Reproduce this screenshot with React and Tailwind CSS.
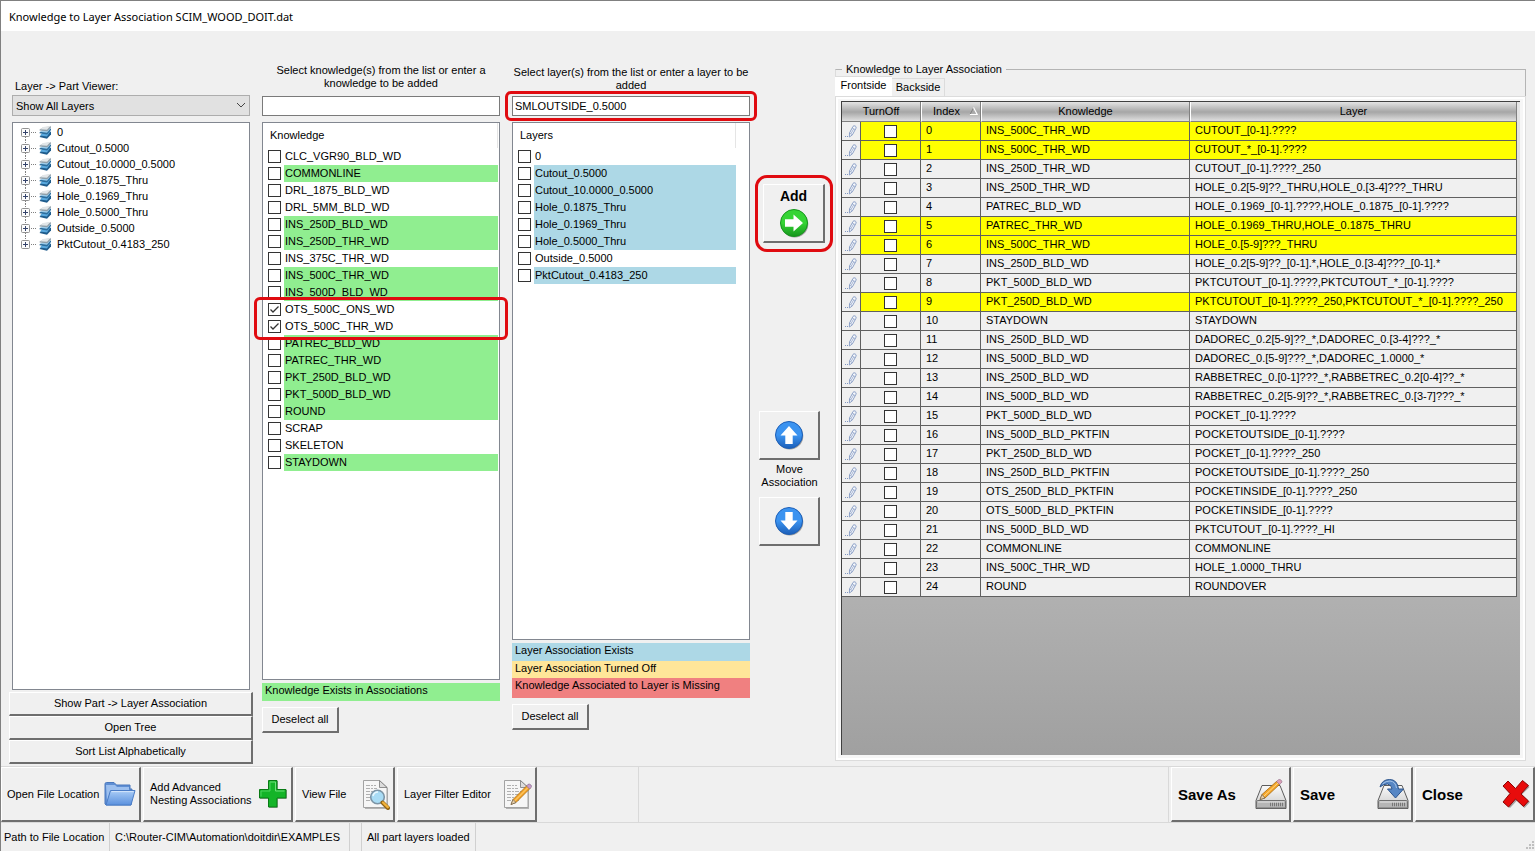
import React, { useState } from "react";

const treeLayers = [
  "0",
  "Cutout_0.5000",
  "Cutout_10.0000_0.5000",
  "Hole_0.1875_Thru",
  "Hole_0.1969_Thru",
  "Hole_0.5000_Thru",
  "Outside_0.5000",
  "PktCutout_0.4183_250",
];

const knowledgeItems = [
  { name: "CLC_VGR90_BLD_WD" },
  { name: "COMMONLINE", exists: true },
  { name: "DRL_1875_BLD_WD" },
  { name: "DRL_5MM_BLD_WD" },
  { name: "INS_250D_BLD_WD", exists: true },
  { name: "INS_250D_THR_WD", exists: true },
  { name: "INS_375C_THR_WD" },
  { name: "INS_500C_THR_WD", exists: true },
  { name: "INS_500D_BLD_WD", exists: true },
  { name: "OTS_500C_ONS_WD", checked: true, marked: true },
  { name: "OTS_500C_THR_WD", checked: true },
  { name: "PATREC_BLD_WD", exists: true },
  { name: "PATREC_THR_WD", exists: true },
  { name: "PKT_250D_BLD_WD", exists: true },
  { name: "PKT_500D_BLD_WD", exists: true },
  { name: "ROUND", exists: true },
  { name: "SCRAP" },
  { name: "SKELETON" },
  { name: "STAYDOWN", exists: true },
];

const layerItems = [
  { name: "0" },
  { name: "Cutout_0.5000", exists: true },
  { name: "Cutout_10.0000_0.5000", exists: true },
  { name: "Hole_0.1875_Thru", exists: true },
  { name: "Hole_0.1969_Thru", exists: true },
  { name: "Hole_0.5000_Thru", exists: true },
  { name: "Outside_0.5000" },
  { name: "PktCutout_0.4183_250", exists: true },
];

const associations = [
  ["INS_500C_THR_WD", "CUTOUT_[0-1].????", true],
  ["INS_500C_THR_WD", "CUTOUT_*_[0-1].????", true],
  ["INS_250D_THR_WD", "CUTOUT_[0-1].????_250"],
  ["INS_250D_THR_WD", "HOLE_0.2[5-9]??_THRU,HOLE_0.[3-4]???_THRU"],
  ["PATREC_BLD_WD", "HOLE_0.1969_[0-1].????,HOLE_0.1875_[0-1].????"],
  ["PATREC_THR_WD", "HOLE_0.1969_THRU,HOLE_0.1875_THRU", true],
  ["INS_500C_THR_WD", "HOLE_0.[5-9]???_THRU", true],
  ["INS_250D_BLD_WD", "HOLE_0.2[5-9]??_[0-1].*,HOLE_0.[3-4]???_[0-1].*"],
  ["PKT_500D_BLD_WD", "PKTCUTOUT_[0-1].????,PKTCUTOUT_*_[0-1].????"],
  ["PKT_250D_BLD_WD", "PKTCUTOUT_[0-1].????_250,PKTCUTOUT_*_[0-1].????_250", true],
  ["STAYDOWN", "STAYDOWN"],
  ["INS_250D_BLD_WD", "DADOREC_0.2[5-9]??_*,DADOREC_0.[3-4]???_*"],
  ["INS_500D_BLD_WD", "DADOREC_0.[5-9]???_*,DADOREC_1.0000_*"],
  ["INS_250D_BLD_WD", "RABBETREC_0.[0-1]???_*,RABBETREC_0.2[0-4]??_*"],
  ["INS_500D_BLD_WD", "RABBETREC_0.2[5-9]??_*,RABBETREC_0.[3-7]???_*"],
  ["PKT_500D_BLD_WD", "POCKET_[0-1].????"],
  ["INS_500D_BLD_PKTFIN", "POCKETOUTSIDE_[0-1].????"],
  ["PKT_250D_BLD_WD", "POCKET_[0-1].????_250"],
  ["INS_250D_BLD_PKTFIN", "POCKETOUTSIDE_[0-1].????_250"],
  ["OTS_250D_BLD_PKTFIN", "POCKETINSIDE_[0-1].????_250"],
  ["OTS_500D_BLD_PKTFIN", "POCKETINSIDE_[0-1].????"],
  ["INS_500D_BLD_WD", "PKTCUTOUT_[0-1].????_HI"],
  ["COMMONLINE", "COMMONLINE"],
  ["INS_500C_THR_WD", "HOLE_1.0000_THRU"],
  ["ROUND", "ROUNDOVER"],
];

const Button = ({ className = "", children, ...props }) => (
  <button
    type="button"
    className={`border-t border-l border-r-2 border-b-2 border-t-white border-l-white border-r-[#6e6e6e] border-b-[#6e6e6e] bg-[#f0f0f0] ${className}`}
    {...props}
  >
    {children}
  </button>
);

const Checkbox = (props) => (
  <span className="relative block h-[13px] w-[13px] shrink-0">
    <input
      type="checkbox"
      className="peer block h-[13px] w-[13px] appearance-none border border-[#333] bg-white"
      {...props}
    />
    <svg
      className="pointer-events-none absolute inset-0 hidden peer-checked:block"
      width="13"
      height="13"
      viewBox="0 0 13 13"
      fill="none"
      stroke="#333"
      strokeWidth="1.3"
    >
      <path d="M2.5 6.5 L5 9 L10.5 3.5" />
    </svg>
  </span>
);

const ExpanderIcon = ({ first, last }) => (
  <svg width="24" height="16" viewBox="0 0 24 16" className="shrink-0">
    {!first && <path d="M4.5 0V4" stroke="#808080" strokeDasharray="1 1" />}
    {!last && <path d="M4.5 13V16" stroke="#808080" strokeDasharray="1 1" />}
    <path d="M10 8.5H16" stroke="#808080" strokeDasharray="1 1" />
    <rect x="0.5" y="4.5" width="8" height="8" rx="1" fill="#fcfcfc" stroke="#919191" />
    <path d="M2 8.5H7M4.5 6V11" stroke="#34436b" />
  </svg>
);

const LayersIcon = () => (
  <svg width="13" height="14" viewBox="0 0 13 14" className="-ml-[6px] shrink-0">
    <path d="M3.5 8.5L12 6.8V9.6L8 13.8L0.5 12Z" fill="#1f5c8c" />
    <path d="M4 7.2L11.8 5.8L8 11.6L0.8 10.4Z" fill="#5aa9de" />
    <path d="M3.8 5.2L12 3.6V5L8.2 9.4L0.5 8.2V7.4Z" fill="#2c6e9e" />
    <path d="M4 4.8L11.6 3.4L8 7.8L1 6.8Z" fill="#9fcdea" />
    <path d="M4 2.6L12 1.2V2.4L8.2 6.2L0.6 5.4V4.6Z" fill="#8f9ea8" />
    <path d="M4.2 2L11.6 0.8L8 4.8L1 4.2Z" fill="#e2e6e8" />
  </svg>
);

const ArrowIcon = ({ color, dark, rotate, id }) => (
  <svg width="30" height="30" viewBox="0 0 30 30">
    <defs>
      <linearGradient id={id} x1="0" y1="0" x2="0" y2="1">
        <stop offset="0" stopColor={color} />
        <stop offset="0.5" stopColor={color} />
        <stop offset="1" stopColor={dark} />
      </linearGradient>
    </defs>
    <circle cx="15.7" cy="16" r="13.6" fill="#000" opacity="0.35" />
    <circle cx="15" cy="15" r="13.5" fill={`url(#${id})`} stroke={dark} />
    <path
      d="M6 11.3H14.5V6.5L24 15L14.5 23.5V18.7H6Z"
      fill="#fff"
      transform={`rotate(${rotate} 15 15)`}
    />
  </svg>
);

const PencilIcon = () => (
  <svg width="14" height="14" viewBox="0 0 14 14" className="mx-auto mt-[2px]">
    <path
      d="M5.5 9L9 2.4Q9.8 1.4 11.2 2T12 4.2L8.4 10.8L5.4 13Z"
      fill="#f6f8fb"
      stroke="#8197c2"
      strokeWidth="0.9"
    />
    <path d="M8.2 4L11.2 5.6M5.6 9.2L8.2 10.6M7 9.6L9.6 5" stroke="#8197c2" strokeWidth="0.7" />
    <path d="M1 12.5H2M3 12.5H4" stroke="#8197c2" />
  </svg>
);

const FolderIcon = () => (
  <svg width="32" height="26" viewBox="0 0 32 26">
    <defs>
      <linearGradient id="folder" x1="0" y1="0" x2="0" y2="1">
        <stop offset="0" stopColor="#a9ccf6" />
        <stop offset="1" stopColor="#5b91de" />
      </linearGradient>
    </defs>
    <path d="M1 23V3Q1 1.5 2.5 1.5H10L12.5 4H26V8H28L27 24H2Z" fill="#5f8fd4" stroke="#4a78bd" />
    <path d="M2 4H11L13 6H25V10H7L3 20Z" fill="#9dc0ef" />
    <path d="M6.5 9.5H31L27 24H2Z" fill="url(#folder)" stroke="#4a7cc6" />
    <path d="M7.5 10.6H29.6" stroke="#d3e5fb" />
  </svg>
);

const PlusIcon = () => (
  <svg width="30" height="30" viewBox="0 0 30 30">
    <path d="M11 2H20V11H29V20H20V29H11V20H2V11H11Z" fill="#555" opacity="0.45" />
    <path
      d="M10.5 1.5H19V10.5H28V19H19V28H10.5V19H1.5V10.5H10.5Z"
      fill="#14b428"
      stroke="#087a14"
    />
    <path d="M12 3H17.5V12H26.5" fill="none" stroke="#6ee07a" />
    <path d="M12 3V12H3V17.5" fill="none" stroke="#4ed35e" />
  </svg>
);

const PagePaper = () => (
  <>
    <path d="M3 3H19L26 9V30H3Z" fill="#8a8a8a" opacity="0.6" />
    <path d="M1.5 1.5H17.5L25 8.5V28.5H1.5Z" fill="#f6f6f6" stroke="#a2a2a2" />
    <path d="M17.5 1.5L25 8.5H17.5Z" fill="#dcdcdc" stroke="#777" strokeWidth="0.8" />
    <path
      d="M4 6.5H14M4 9.5H15M4 12.5H20M4 15.5H20M4 18.5H18M4 21.5H17"
      stroke="#b0b0b0"
      strokeDasharray="4 1 2 1"
    />
  </>
);

const ViewFileIcon = () => (
  <svg width="28" height="31" viewBox="0 0 28 31">
    <PagePaper />
    <circle cx="15.5" cy="18" r="6.8" fill="#a9dcf5" stroke="#7d95a6" strokeWidth="1.6" />
    <path d="M11 17Q12 13 16 13" stroke="#e9f8ff" strokeWidth="1.6" fill="none" />
    <path d="M20.5 23.5L26 29" stroke="#8f6213" strokeWidth="4" strokeLinecap="round" />
    <path d="M21 23.5L25.8 28.2" stroke="#f1b13a" strokeWidth="2.4" strokeLinecap="round" />
  </svg>
);

const EditFileIcon = () => (
  <svg width="29" height="31" viewBox="0 0 29 31">
    <PagePaper />
    <path d="M8 25.5L10 20.5L24 6.5L27 9.5L13 23.5Z" fill="#f5a62a" stroke="#a76a10" strokeWidth="0.8" />
    <path d="M11.5 22L25 8.5" stroke="#ffd98a" />
    <path d="M8 25.5L10 20.5L13 23.5Z" fill="#e9cfa6" stroke="#555" strokeWidth="0.6" />
    <path d="M23.5 7L25 5.3Q26.5 4.5 28 6T27.8 8.7L26.5 10Z" fill="#c79ac9" stroke="#7c6a85" strokeWidth="0.6" />
  </svg>
);

const DiskBody = () => (
  <>
    <defs>
      <linearGradient id="disk" x1="0" y1="0" x2="0" y2="1">
        <stop offset="0" stopColor="#fafafa" />
        <stop offset="1" stopColor="#c9c9c9" />
      </linearGradient>
    </defs>
    <path d="M7 7.5H25L31 22.5V30.5H1V22.5Z" fill="url(#disk)" stroke="#5c5c5c" strokeLinejoin="round" />
    <rect x="1.5" y="22.5" width="29" height="7.5" rx="1" fill="#b5b5b5" stroke="#707070" />
    <path d="M15 26.2H28" stroke="#777" strokeWidth="4" strokeDasharray="1 1" />
    <path d="M3 24H29" stroke="#e6e6e6" />
  </>
);

const SaveAsIcon = () => (
  <svg width="32" height="32" viewBox="0 0 32 32">
    <DiskBody />
    <path d="M5 21.5L7 16.5L22 3L25 6L10 20Z" fill="#f5a62a" stroke="#a76a10" strokeWidth="0.8" />
    <path d="M8.5 18.5L23 5" stroke="#ffd98a" />
    <path d="M5 21.5L7 16.5L10 20Z" fill="#e9cfa6" stroke="#555" strokeWidth="0.6" />
    <path d="M21.5 3.5L23.3 1.8Q25 0.8 26.4 2.4T26.2 5L24.5 6.6Z" fill="#dba0b8" stroke="#8d6c86" strokeWidth="0.6" />
  </svg>
);

const SaveIcon = () => (
  <svg width="32" height="32" viewBox="0 0 32 32">
    <DiskBody />
    <path
      d="M3 9Q5 1.5 12.5 1.5Q20.5 1.5 21.5 11H26.5L18.5 20L10.5 11H15Q14.5 6.5 10.5 6Q6.5 5.8 3 9Z"
      fill="#5686c4"
      stroke="#2c548c"
      strokeLinejoin="round"
    />
    <path d="M5.5 6Q9 2.8 13 3Q18.5 3.5 19.5 10" stroke="#a5c4e8" fill="none" />
  </svg>
);

const CloseIcon = () => (
  <svg width="30" height="30" viewBox="0 0 30 30">
    <path d="M4 8L8 4L15.5 10.5L23 3L28.5 8L21 15.5L29 23L23.5 29L16 21.5L9 29L3 24L10 16Z" fill="#555" opacity="0.5" />
    <path
      d="M2 7L7 2L14.5 9.5L21.5 1.5L27.5 6.5L20 15L27.5 22L22.5 27.5L14.5 20L7.5 28L2 23L9 14.5Z"
      fill="#e80c0c"
      stroke="#8d0606"
    />
  </svg>
);

const CheckList = ({ title, items, color, className, headerClass }) => (
  <div className="mt-[6px] flex-1 border border-[#828790] bg-white">
    <div className={`h-[25px] border-r border-[#e5e5e5] pt-[6px] pl-[7px] ${headerClass}`}>
      {title}
    </div>
    <ul>
      {items.map((item) => (
        <li key={item.name} className={`relative pl-[5px] ${className}`}>
          <label className="flex h-[17px] items-center gap-[3px]">
            <Checkbox defaultChecked={item.checked} />
            <span className={`h-[17px] flex-1 pl-px leading-[17px] ${item.exists ? color : ""}`}>
              {item.name}
            </span>
          </label>
          {item.marked && (
            <span className="pointer-events-none absolute -top-1 -right-[9px] -left-[9px] z-10 h-[43px] rounded-md border-3 border-[#e00b10]" />
          )}
        </li>
      ))}
    </ul>
  </div>
);

const AssociationTable = () => (
  <table className="w-full table-fixed border-separate border-spacing-0">
    <colgroup>
      <col className="w-[19px]" />
      <col className="w-[60px]" />
      <col className="w-[60px]" />
      <col className="w-[209px]" />
      <col />
    </colgroup>
    <thead>
      <tr className="h-5 bg-linear-to-b from-[#e4e4e4] via-[#a6a6a6] to-[#e6e6e6]">
        <th colSpan={2} className="border-r border-b border-[#808080] p-0 font-normal">
          TurnOff
        </th>
        <th className="border-r border-b border-l border-[#808080] border-l-white p-0 font-normal">
          <div className="flex items-center justify-between pr-[2px] pl-[11px]">
            Index
            <svg width="9" height="9" viewBox="0 0 9 9" fill="none">
              <path d="M4.5 1L1 7.5" stroke="#808080" />
              <path d="M4.5 0.5L8.2 7.5H0.8" stroke="#fff" strokeWidth="1.2" />
            </svg>
          </div>
        </th>
        <th className="border-r border-b border-l border-[#808080] border-l-white p-0 font-normal">
          Knowledge
        </th>
        <th className="border-r border-b border-l border-[#808080] border-l-white p-0 font-normal">
          Layer
        </th>
      </tr>
    </thead>
    <tbody>
      {associations.map(([knowledge, layer, active], index) => (
        <tr key={index} className={`h-[19px] ${active ? "bg-[#ffff00]" : "bg-[#f0f0f0]"}`}>
          <td className="border-r border-b border-[#606060] bg-[#f0f0f0] p-0 align-top">
            <PencilIcon />
          </td>
          <td className="border-r border-b border-[#606060] p-0">
            <div className="flex justify-center">
              <Checkbox aria-label={`Turn off ${index}`} />
            </div>
          </td>
          <td className="border-r border-b border-[#606060] p-0 pl-[5px] align-top leading-[17px]">
            {index}
          </td>
          <td className="border-r border-b border-[#606060] p-0 pl-[5px] align-top leading-[17px]">
            {knowledge}
          </td>
          <td className="truncate border-r border-b border-[#606060] p-0 pl-[5px] align-top leading-[17px]">
            {layer}
          </td>
        </tr>
      ))}
    </tbody>
  </table>
);

const App = () => {
  const [layerText, setLayerText] = useState("SMLOUTSIDE_0.5000");
  const [knowledgeText, setKnowledgeText] = useState("");

  return (
    <div className="flex min-h-screen flex-col border-t border-l border-[#808080] bg-[#f0f0f0] font-['Liberation_Sans',Arial,sans-serif] text-[11px] leading-[13px] text-black">
      <header className="flex h-[30px] items-center bg-white pl-2">
        <h1 className="font-['Noto_Sans','Open_Sans',sans-serif] text-[11px]">
          Knowledge to Layer Association SCIM_WOOD_DOIT.dat
        </h1>
      </header>

      <main className="flex flex-1 pl-[11px]">
        {/* Part viewer */}
        <section className="flex w-[238px] flex-col pt-[49px] pb-[2px]">
          <label htmlFor="viewer" className="pl-[3px]">
            Layer -&gt; Part Viewer:
          </label>
          <div className="relative mt-[2px]">
            <select
              id="viewer"
              className="block h-[21px] w-full appearance-none border border-[#adadad] bg-[#e1e1e1] pt-px pl-[3px]"
            >
              <option>Show All Layers</option>
            </select>
            <svg
              className="pointer-events-none absolute top-[7px] right-1"
              width="10"
              height="7"
              viewBox="0 0 10 7"
              fill="none"
              stroke="#444"
            >
              <path d="M1 1L5 5L9 1" />
            </svg>
          </div>
          <ul className="mt-[6px] flex-1 border border-[#828790] bg-white pt-px pl-2">
            {treeLayers.map((layer, i) => (
              <li key={layer} className="flex h-4 items-center">
                <ExpanderIcon first={i === 0} last={i === treeLayers.length - 1} />
                <LayersIcon />
                <span className="pl-[5px]">{layer}</span>
              </li>
            ))}
          </ul>
          <div className="-mx-[3px] mt-[2px] flex flex-col">
            <Button className="h-6">Show Part -&gt; Layer Association</Button>
            <Button className="h-6">Open Tree</Button>
            <Button className="h-6">Sort List Alphabetically</Button>
          </div>
        </section>

        {/* Knowledge list */}
        <section className="ml-3 flex w-[238px] flex-col pt-[33px] pb-[33px]">
          <label htmlFor="knowledge" className="px-3 text-center">
            Select knowledge(s) from the list or enter a knowledge to be added
          </label>
          <input
            id="knowledge"
            type="text"
            value={knowledgeText}
            onChange={(e) => setKnowledgeText(e.target.value)}
            className="mt-[6px] h-5 border border-[#7a7a7a] bg-white px-[2px]"
          />
          <CheckList
            title="Knowledge"
            items={knowledgeItems}
            color="bg-[#90ee90]"
            className="pr-px"
            headerClass="mr-px"
          />
          <p className="mt-[3px] h-[18px] bg-[#90ee90] pt-px pl-[3px]">
            Knowledge Exists in Associations
          </p>
          <Button className="mt-[6px] h-[26px] w-[77px]">Deselect all</Button>
        </section>

        {/* Layer list */}
        <section className="ml-3 flex w-[238px] flex-col pt-[35px] pb-[36px]">
          <label htmlFor="layer" className="text-center">
            Select layer(s) from the list or enter a layer to be added
          </label>
          <div className="relative mt-1">
            <input
              id="layer"
              type="text"
              value={layerText}
              onChange={(e) => setLayerText(e.target.value)}
              className="block h-5 w-full border border-[#7a7a7a] bg-white px-[2px]"
            />
            <span className="pointer-events-none absolute -inset-x-[7px] -inset-y-[5px] rounded-md border-3 border-[#e00b10]" />
          </div>
          <CheckList
            title="Layers"
            items={layerItems}
            color="bg-[#add8e6]"
            className="pr-[13px]"
            headerClass="mr-[13px]"
          />
          <p className="mt-[3px] h-[18px] bg-[#add8e6] pt-px pl-[3px]">Layer Association Exists</p>
          <p className="h-[17px] bg-[#ffe699] pt-px pl-[3px]">Layer Association Turned Off</p>
          <p className="h-5 bg-[#f08080] pt-px pl-[3px]">Knowledge Associated to Layer is Missing</p>
          <Button className="mt-[6px] h-[26px] w-[77px]">Deselect all</Button>
        </section>

        {/* Add and move buttons */}
        <section className="mr-[10px] ml-[9px] flex w-[66px] flex-col pt-[153px]">
          <div className="relative self-end">
            <Button className="flex h-[59px] w-[62px] flex-col items-center justify-center gap-1 text-sm leading-4 font-bold">
              Add
              <ArrowIcon id="add" color="#35d435" dark="#16951c" rotate={0} />
            </Button>
            <span className="pointer-events-none absolute -inset-x-2 -inset-y-[9px] rounded-xl border-3 border-[#e00b10]" />
          </div>
          <div className="mt-[168px] flex w-[61px] flex-col text-center">
            <Button aria-label="Move association up" className="flex h-[49px] items-center justify-center">
              <ArrowIcon id="up" color="#3b93f0" dark="#1c5fb8" rotate={-90} />
            </Button>
            <p className="mt-[3px] mb-2">
              Move
              <br />
              Association
            </p>
            <Button aria-label="Move association down" className="flex h-[49px] items-center justify-center">
              <ArrowIcon id="down" color="#3b93f0" dark="#1c5fb8" rotate={90} />
            </Button>
          </div>
        </section>

        {/* Association grid */}
        <section className="flex min-w-0 flex-1 flex-col pt-8 pr-[9px] pb-[5px]">
          <fieldset className="flex min-w-0 flex-1 flex-col border border-[#b4b4b4] border-l-[#dcdcdc]">
            <legend className="ml-[6px] px-1">Knowledge to Layer Association</legend>
            <div className="flex items-end" role="tablist">
              <button
                type="button"
                role="tab"
                aria-selected="true"
                className="-ml-px h-5 w-[57px] border-t border-[#dcdcdc] bg-white pb-[2px]"
              >
                Frontside
              </button>
              <button
                type="button"
                role="tab"
                aria-selected="false"
                className="h-[18px] w-[53px] border-t border-r border-[#dcdcdc]"
              >
                Backside
              </button>
            </div>
            <div className="-mx-px -mb-px flex flex-1 flex-col border border-[#dcdcdc] bg-white p-[2px]">
              <div className="flex-1 bg-[#f6f6f6] p-[2px] pr-[3px] pb-[3px] pl-[3px]">
                <div className="h-full border-t border-l border-[#404040] bg-linear-to-b from-[#e6e6e6] to-[#a0a0a0] pr-[3px]">
                  <AssociationTable />
                </div>
              </div>
            </div>
          </fieldset>
        </section>
      </main>

      <nav className="flex h-[57px] items-stretch gap-[2px] border-y border-[#d9d9d9]">
        <Button className="flex w-[140px] items-center justify-between pr-[3px] pl-[5px]">
          Open File Location
          <FolderIcon />
        </Button>
        <Button className="flex w-[150px] items-center justify-between pr-[3px] pl-[6px] text-left">
          <span>
            Add Advanced
            <br />
            Nesting Associations
          </span>
          <PlusIcon />
        </Button>
        <Button className="flex w-[100px] items-center justify-between pr-[3px] pl-[6px]">
          View File
          <ViewFileIcon />
        </Button>
        <Button className="flex w-[140px] items-center justify-between pr-[3px] pl-[6px]">
          Layer Filter Editor
          <EditFileIcon />
        </Button>
        <div className="w-[100px] border-r border-[#d9d9d9]" />
        <div className="flex-1 border-r border-[#d9d9d9]" />
        <Button className="flex w-[120px] items-center justify-between pr-[2px] pl-[6px] text-[15px] font-bold">
          Save As
          <SaveAsIcon />
        </Button>
        <Button className="flex w-[120px] items-center justify-between pr-[2px] pl-[6px] text-[15px] font-bold">
          Save
          <SaveIcon />
        </Button>
        <Button className="flex w-[120px] items-center justify-between pr-[2px] pl-[6px] text-[15px] font-bold">
          Close
          <CloseIcon />
        </Button>
      </nav>

      <footer className="flex h-[28px] items-stretch leading-[28px]">
        <span className="w-[109px] border-r border-[#d0d0d0] pl-[3px]">Path to File Location</span>
        <span className="w-[240px] border-r border-[#d0d0d0] pl-[5px]">
          C:\Router-CIM\Automation\doitdir\EXAMPLES
        </span>
        <span className="w-3 border-r border-[#d0d0d0]" />
        <span className="w-[114px] border-r border-[#d0d0d0] pl-[5px]">All part layers loaded</span>
        <svg className="ml-auto self-end" width="10" height="10" viewBox="0 0 10 10" fill="#bfbfbf">
          <path d="M7 0H9V2H7ZM4 3H6V5H4ZM7 3H9V5H7ZM1 6H3V8H1ZM4 6H6V8H4ZM7 6H9V8H7Z" />
        </svg>
      </footer>
    </div>
  );
};

export default App;
